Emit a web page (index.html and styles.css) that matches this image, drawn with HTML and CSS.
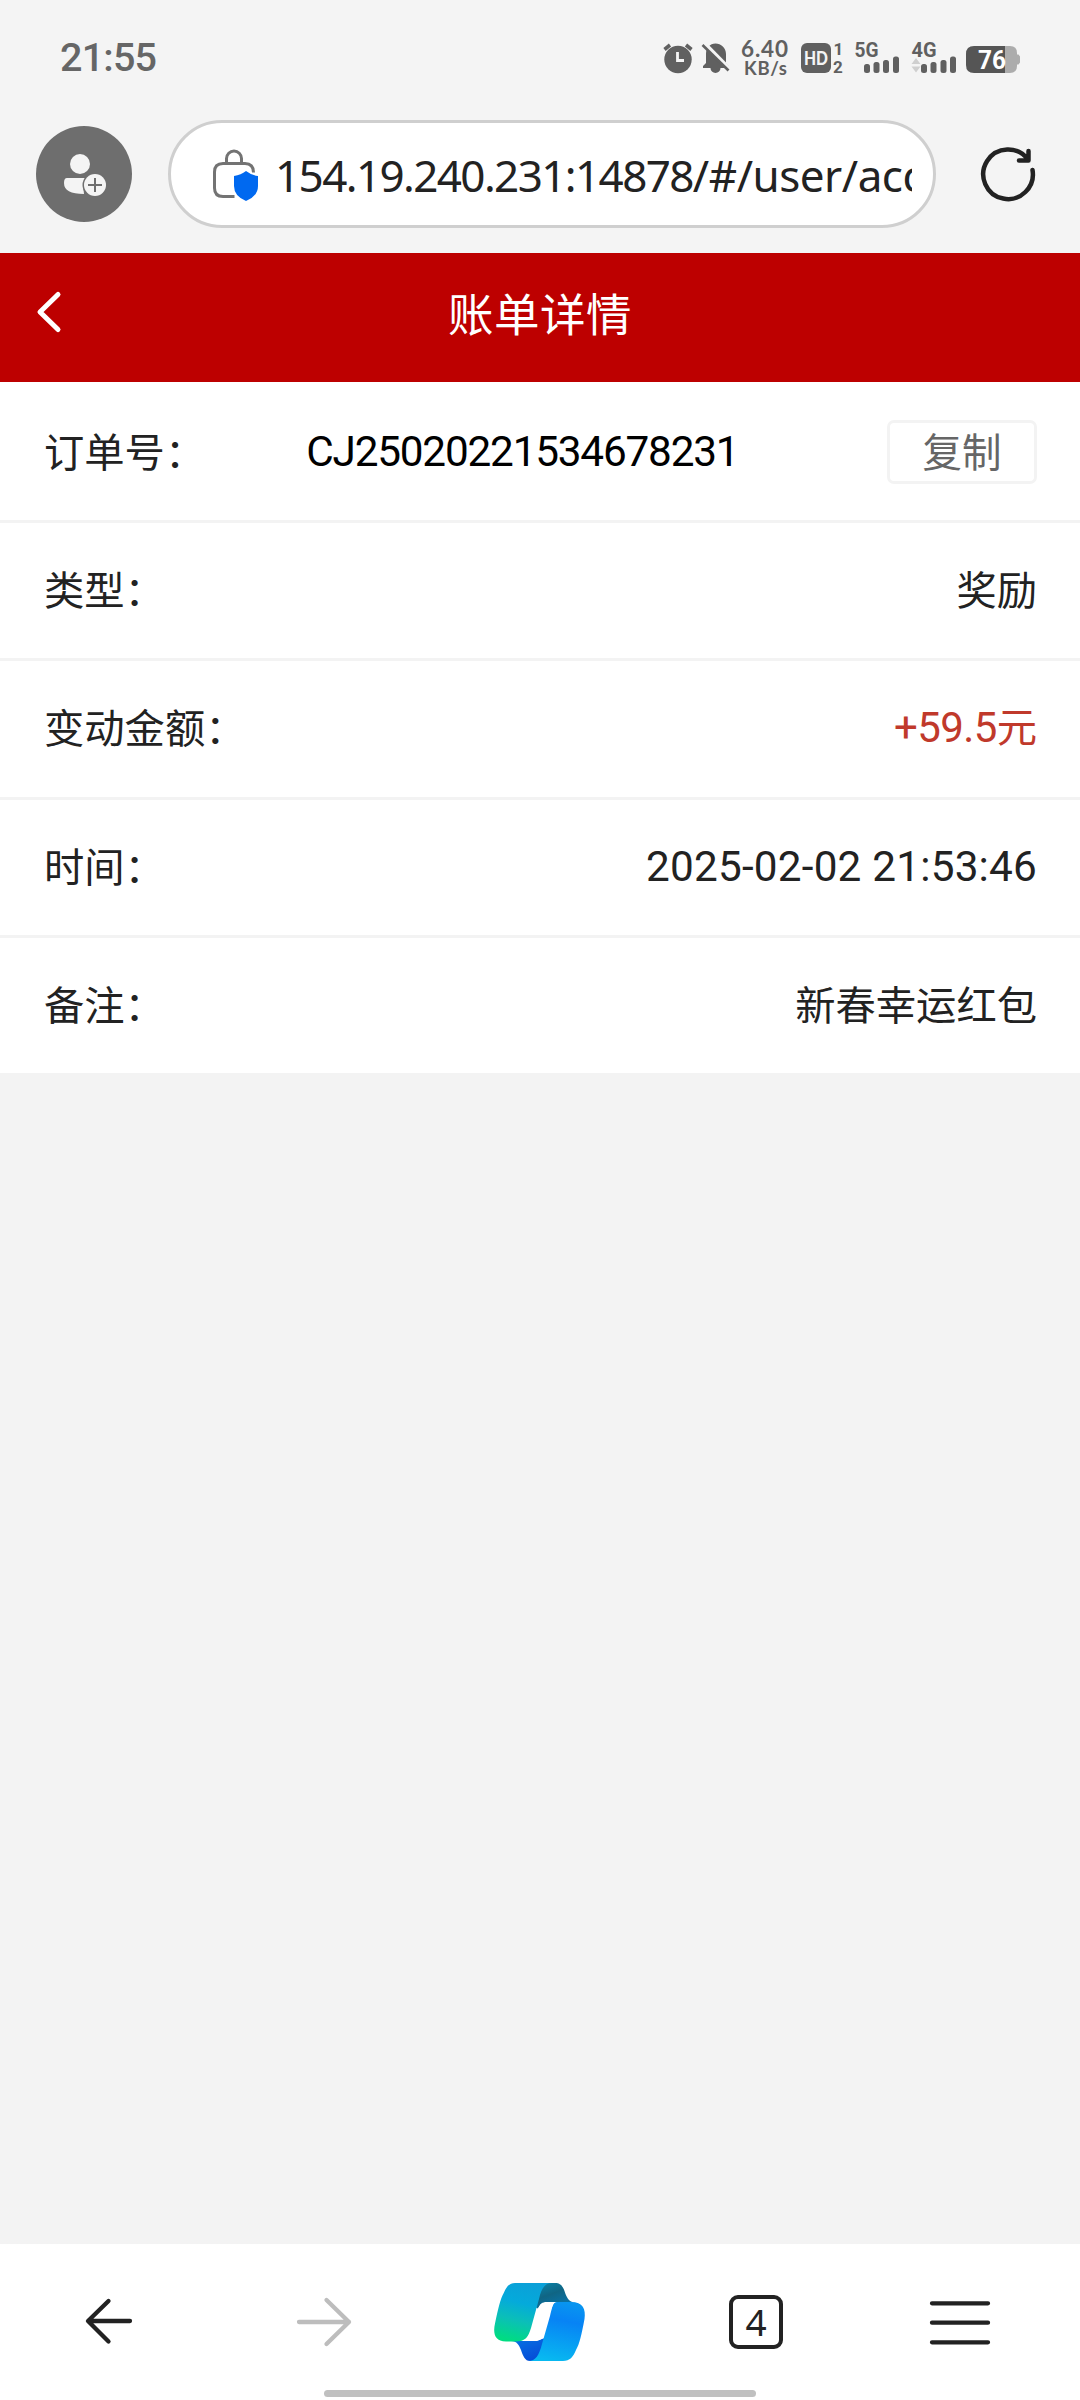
FILE: index.html
```html
<!DOCTYPE html>
<html lang="zh-CN">
<head>
<meta charset="utf-8">
<title>账单详情</title>
<link rel="stylesheet" href="styles.css">
</head>
<body>
<div class="status">
  <span class="clock">21:55</span>
  <svg class="status-icons" width="360" height="60" viewBox="662 28 360 60" fill="#606060">
    <g>
      <circle cx="678" cy="59.500" r="13.700"/>
      <path d="M664.500 49.500l5.500-4.500M691.500 49.500l-5.500-4.500" stroke="#606060" stroke-width="3.600"/>
      <path d="M677.500 52v8.500h6.500" fill="none" stroke="#f4f4f4" stroke-width="2.800"/>
    </g>
    <g>
      <path d="M703 68v-2l3-3v-9c0-6 4-10.500 9.500-10.500S726 48 726 54v9l3 3v2h-8.500a5 5 0 0 1-10 0z"/>
      <path d="M704 43l26 26.500" stroke="#f4f4f4" stroke-width="4"/>
      <path d="M702.500 45l26 25.500" stroke="#606060" stroke-width="2.600"/>
    </g>
    <text class="net-speed" x="741" y="56.500" textLength="47">6.40</text>
    <text class="net-unit" x="744" y="74.500" textLength="43">KB/s</text>
    <rect x="801" y="43" width="30" height="30" rx="6"/>
    <text class="hd" x="804" y="65" textLength="24" lengthAdjust="spacingAndGlyphs">HD</text>
    <text class="sim" x="833.500" y="55">1</text>
    <text class="sim" x="833" y="72.500">2</text>
    <text class="gen" x="854.500" y="57" textLength="24" lengthAdjust="spacingAndGlyphs">5G</text>
    <rect x="864" y="64" width="6" height="9" rx="2.500"/>
    <rect x="873.500" y="62" width="6" height="11" rx="2.500"/>
    <rect x="883" y="60" width="6" height="13" rx="2.500"/>
    <rect x="893" y="56.500" width="6" height="16.500" rx="2.500"/>
    <text class="gen" x="911.500" y="57" textLength="25" lengthAdjust="spacingAndGlyphs">4G</text>
    <path d="M916 58l4.500 6h-9zM916 72.500l4.500-6h-9z" fill="#cfcfcf"/>
    <rect x="921" y="64" width="6" height="9" rx="2.500"/>
    <rect x="930.500" y="62" width="6" height="11" rx="2.500"/>
    <rect x="940.500" y="60" width="6" height="13" rx="2.500"/>
    <rect x="950" y="56.500" width="6" height="16.500" rx="2.500"/>
    <path d="M1005 46h5q7 0 7 7v1.500h1.500l1.500 2v6l-1.500 2H1017V66q0 7-7 7h-5z" fill="#acacac"/>
    <path d="M1005 46v27h-31q-8 0-8-8v-11q0-8 8-8z" fill="#555"/>
    <text class="charge" x="978" y="68.500" textLength="28" lengthAdjust="spacingAndGlyphs">76</text>
  </svg>
</div>
<div class="browser-bar">
  <div class="avatar">
    <svg width="96" height="96" viewBox="36 126 96 96">
      <circle cx="80" cy="164" r="10" fill="#f4f4f4"/>
      <path d="M67 178h21q-6 5-4 16-20 0-20-11 0-5 3-5z" fill="#f4f4f4"/>
      <circle cx="95" cy="185" r="12.500" fill="#6e6e6e"/>
      <circle cx="95" cy="185" r="11" fill="#f4f4f4"/>
      <path d="M95 178v14M88 185h14" stroke="#6e6e6e" stroke-width="2"/>
    </svg>
  </div>
  <div class="address">
    <svg class="lock" width="48" height="54" viewBox="212 148 48 54" fill="none" stroke="#737373" stroke-width="3">
      <path d="M226.500 163v-4.500a7.500 7.500 0 0 1 15 0V163M234.500 196.500H223q-8.500 0-8.500-8.500v-16q0-8.500 8.500-8.500h22q8.500 0 8.500 9"/>
      <path d="M246 171q5 4 12 5v10q0 10-12 15-12-5-12-15v-10q7-1 12-5z" fill="#0069f0" stroke="none"/>
    </svg>
    <span class="url">154.19.240.231:14878<span class="path">/#/user/acc</span></span>
  </div>
  <svg class="reload" width="60" height="60" viewBox="978 144 60 60" fill="none" stroke="#222" stroke-width="4.500" stroke-linecap="round" stroke-linejoin="round">
    <path d="M1032.500 170A24.800 24.800 0 1 1 1028 159.500M1028.500 151v9.500h-9.500"/>
  </svg>
</div>
<header class="title-bar">
  <svg class="back" width="28" height="46" viewBox="36 289 28 46" fill="none" stroke="#fff" stroke-width="5" stroke-linecap="round" stroke-linejoin="round"><path d="M58 294.500L40 312l18 17.500"/></svg>
  <h1 class="title">账单详情</h1>
</header>
<main class="details">
  <div class="row"><span class="label">订单号：</span><span class="order">CJ25020221534678231</span><button class="copy">复制</button></div>
  <div class="row"><span class="label">类型：</span><span class="value">奖励</span></div>
  <div class="row"><span class="label">变动金额：</span><span class="value amount"><span class="figure">+59.5</span>元</span></div>
  <div class="row"><span class="label">时间：</span><span class="date">2025-02-02 21:53:46</span></div>
  <div class="row"><span class="label">备注：</span><span class="value">新春幸运红包</span></div>
</main>
<footer class="toolbar">
  <nav class="tools">
    <svg width="216" height="100" viewBox="0 2271 216 100" fill="none" stroke="#222" stroke-width="4.300" stroke-linecap="round" stroke-linejoin="round"><path d="M130 2321H88.500M108.500 2301L88 2321l20.500 20.500"/></svg>
    <svg width="216" height="100" viewBox="216 2271 216 100" fill="none" stroke="#bdbdbd" stroke-width="4.300" stroke-linecap="round" stroke-linejoin="round"><path d="M299 2322h50M326.500 2300l22.500 22-22.500 22"/></svg>
    <svg width="216" height="100" viewBox="432 2271 216 100">
      <defs>
        <linearGradient id="g1" x1="0.600" y1="0" x2="0.350" y2="1"><stop offset="0" stop-color="#0ba0d8"/><stop offset=".35" stop-color="#04aadb"/><stop offset=".65" stop-color="#0bbfb8"/><stop offset="1" stop-color="#00dc82"/></linearGradient>
        <linearGradient id="g2" x1="0.600" y1="0" x2="0.400" y2="1"><stop offset="0" stop-color="#0895f0"/><stop offset=".3" stop-color="#0783f5"/><stop offset="1" stop-color="#08b9f0"/></linearGradient>
        <linearGradient id="g3" x1="0" y1="0" x2=".6" y2="1"><stop offset="0" stop-color="#0a86ac"/><stop offset=".5" stop-color="#106584"/><stop offset="1" stop-color="#0875ad"/></linearGradient>
        <linearGradient id="g4" x1="0" y1="0" x2=".6" y2="1"><stop offset="0" stop-color="#0876e5"/><stop offset="1" stop-color="#064bd6"/></linearGradient>
      </defs>
      <path d="M544 2283h11c7 0 8.500 5 10.500 11 2 5 4 8 10 8.500H547c-5 0-7 2-9 6l-4-2z" fill="url(#g3)"/>
      <path d="M511 2341c6 0 8 4 10 9 2 6 4 11 9 11h6l12-24-12 4z" fill="url(#g4)"/>
      <path d="M515 2283h37c-8 0-11 7-13 16l-8 29c-3 9-5 13.500-16 13.500h-9c-12 0-13-9-11-18 3-14 5-24 9-31 2-5 5-9.500 11-9.500z" fill="url(#g1)"/>
      <path d="M556 2302h15c12 0 15 7 13.500 17-3 16-5 25-8.500 31-3 7-6 11-13 11h-35c8 0 11-6 14-17l8-28c2-8 3-14 6-14z" fill="url(#g2)"/>
      <path d="M557 2302h-10c-5 0-7 2-8.500 6l-7 22c-2 7-4 11-9 11H535c5 0 7-2 9-7l5-18c3-9 4-14 8-14z" fill="#fff"/>
    </svg>
    <div class="tabs"><span class="tab-count">4</span></div>
    <svg width="216" height="100" viewBox="852 2271 216 100" stroke="#222" stroke-width="4.300" stroke-linecap="round"><path d="M932 2303.300h56M932 2322.700h56M932 2342.300h56"/></svg>
  </nav>
  <div class="home-pill"></div>
</footer>
</body>
</html>
```
FILE: styles.css
```css
* { box-sizing: border-box; }
body {
  margin: 0;
  width: 1080px;
  height: 2400px;
  display: flex;
  flex-direction: column;
  overflow: hidden;
  background: #f3f3f3;
  color: #222;
  font-family: "Noto Sans CJK SC", sans-serif;
}
svg { display: block; flex: none; }

.status {
  height: 112px;
  display: flex;
  justify-content: space-between;
  align-items: flex-start;
  padding: 28px 58px 0 60px;
  background: #f4f4f4;
}
.clock { font: 500 39.500px/60px Roboto, sans-serif; color: #666; letter-spacing: -0.8px; }
.status-icons text { font-family: Lato, sans-serif; font-weight: 700; }
.status-icons .net-speed { font-size: 22.500px; }
.status-icons .net-unit { font-size: 18.500px; }
.status-icons .hd { font-size: 18px; font-weight: 900; fill: #f4f4f4; }
.status-icons .sim { font: 700 17px Roboto, sans-serif; }
.status-icons .gen { font: 700 19.500px Roboto, sans-serif; }
.status-icons .charge { font: 700 25px Roboto, sans-serif; fill: #fff; }

.browser-bar {
  height: 141px;
  display: flex;
  align-items: flex-start;
  padding: 8px 42px 0 36px;
  background: #f4f4f4;
}
.avatar { width: 96px; height: 96px; margin-top: 6px; border-radius: 50%; background: #6e6e6e; }
.address {
  width: 768px;
  height: 108px;
  margin-left: 36px;
  padding: 0 21px 0 41px;
  display: flex;
  align-items: center;
  border: 3px solid #cfcfcf;
  border-radius: 54px;
  background: #fff;
}
.lock { margin-top: 1px; }
.url {
  flex: 1;
  margin: 2px 0 0 15px;
  overflow: hidden;
  white-space: nowrap;
  font: 44px/60px "Noto Sans", sans-serif;
  letter-spacing: -1.600px;
}
.path { letter-spacing: -0.500px; }
.reload { margin: 24px 0 0 42px; }

.title-bar {
  height: 129px;
  display: grid;
  grid-template-columns: 100px 1fr 100px;
  align-items: center;
  background: #bd0000;
  color: #fff;
}
.back { margin: 0 0 12px 36px; }
.title { margin: 0 0 11px; text-align: center; font-size: 45.500px; line-height: 66px; font-weight: 400; letter-spacing: 0.500px; }

.row {
  height: 138.300px;
  padding: 0 43px 1px 44px;
  display: flex;
  justify-content: space-between;
  align-items: center;
  background: #fff;
  border-bottom: 3px solid #f3f3f3;
  font-size: 40.300px;
  line-height: 60px;
}
.row:first-child { height: 141px; padding-top: 1px; padding-bottom: 0; }
.label, .value { padding-bottom: 4px; white-space: nowrap; }
.order, .date { font-family: Roboto, sans-serif; font-size: 42.300px; white-space: nowrap; }
.order { flex: 1; margin-left: 101px; letter-spacing: -1.200px; color: #000; }
.date { letter-spacing: 0.200px; }
.amount { color: #c0392b; }
.figure { font-family: Roboto, sans-serif; font-size: 42px; letter-spacing: -0.600px; }
.copy {
  width: 150px;
  height: 64px;
  padding: 0 0 4px;
  border: 3px solid #f3f3f3;
  border-radius: 7px;
  background: #fff;
  color: #666;
  font: 39.500px/54px "Noto Sans CJK SC", sans-serif;
}

.toolbar { height: 156px; margin-top: auto; background: #fff; }
.tools { height: 146px; padding-top: 27px; display: flex; }
.tabs { flex: none; width: 204px; height: 100px; padding: 24px 0 0 81px; }
.tab-count {
  display: block;
  width: 54px;
  height: 54px;
  border: 4px solid #222;
  border-radius: 9px;
  text-align: center;
  font: 37px/46px "Noto Sans", sans-serif;
}
.home-pill { width: 432px; height: 7px; margin: 0 auto; border-radius: 4px; background: #c0c0c0; }
```
